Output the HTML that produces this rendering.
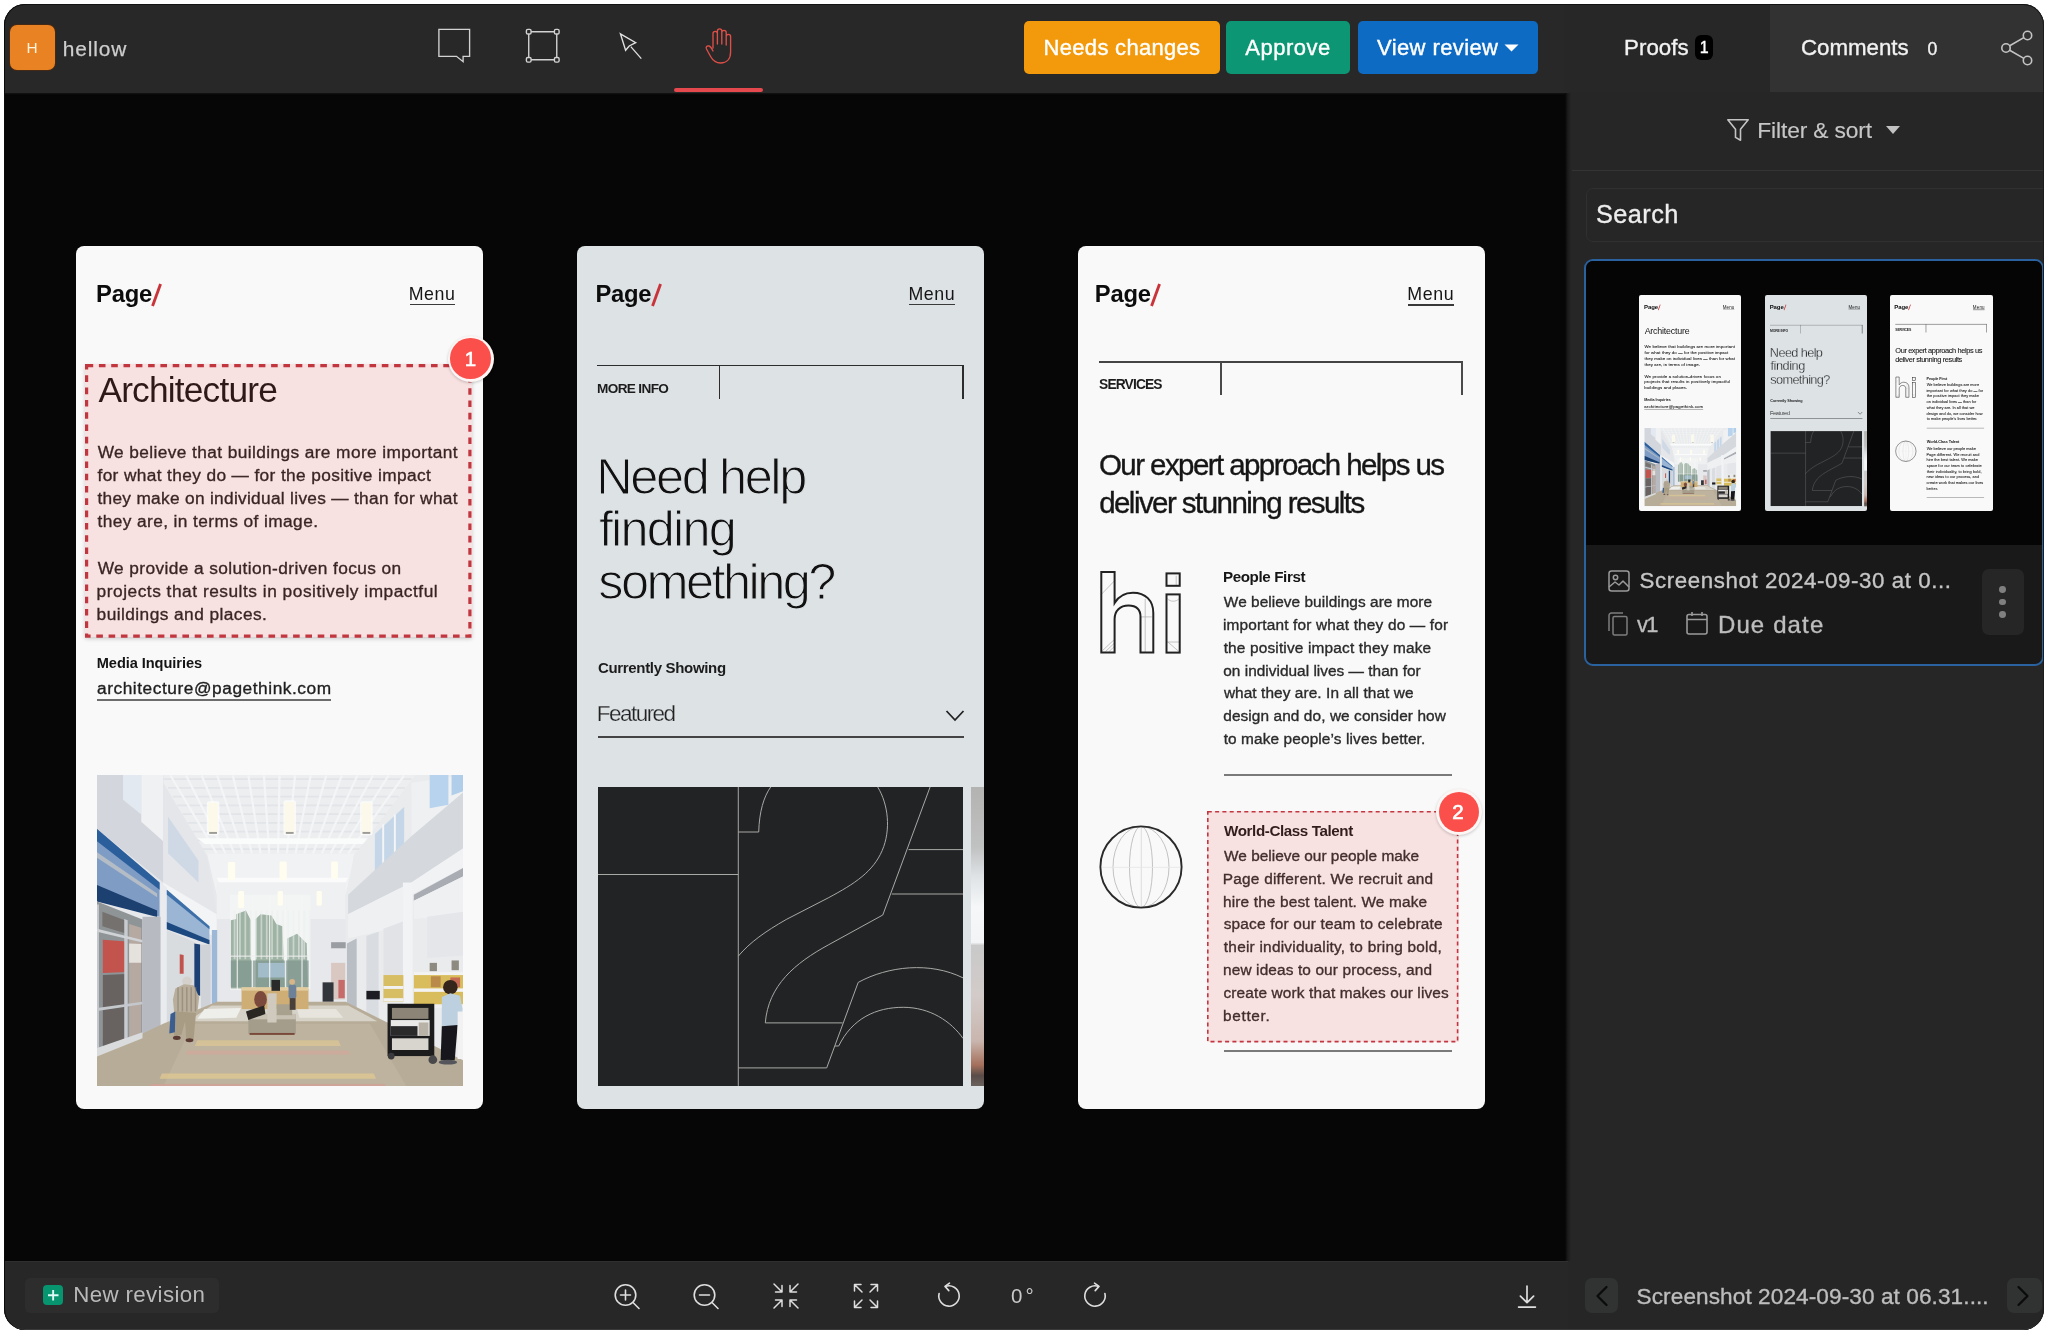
<!DOCTYPE html>
<html lang="en">
<head>
<meta charset="utf-8">
<title>hellow</title>
<style>
*{box-sizing:border-box;margin:0;padding:0}
html,body{width:2048px;height:1334px;overflow:hidden;background:#fff}
body{font-family:"Liberation Sans",sans-serif;position:relative;color:#e6e6e6}
.abs,.win *{position:absolute}
.win{position:absolute;left:4px;top:4px;width:2040px;height:1326px;border-radius:21px;background:#060606;overflow:hidden;will-change:transform;transform:translateZ(0)}
.t{white-space:nowrap;line-height:1}
.m{-webkit-text-stroke:.35px}
svg{display:block;overflow:visible}
/* header */
.hdr{left:0;top:0;width:1564px;height:88.500px;background:#282828;box-shadow:0 1px 1.500px #151515}
.side{left:1564px;top:0;width:476px;height:1326px;background:#262626}
.foot{left:0;top:1257px;width:1564px;height:69px;background:#272727;box-shadow:inset 0 1px 0 #2f2f2f}
.btn{top:17px;height:53px;border-radius:5px;color:#fff;-webkit-text-stroke:.4px;font-size:22px;text-align:center;line-height:53px;white-space:nowrap}
/* cards */
.card{top:242px;width:407px;height:862.7px;border-radius:8px;overflow:hidden;color:#1a1a1a}
.card .t{color:#151515}
</style>
</head>
<body>
<div class="win">
  <!-- canvas -->
  <div class="canvas" style="left:0;top:89px;width:1564px;height:1168px;background:#060606"></div>

  <!-- header -->
  <div class="hdr" id="hdr">
    <div style="left:6px;top:21px;width:45px;height:45px;border-radius:7px;background:#e88223;box-shadow:0 0 0 1px rgba(90,40,10,.6)"></div>
    <div class="t" style="left:22.54px;top:36.00px;font-size:15.4px;color:#fff3d8;letter-spacing:0;">H</div>
<div class="t" style="left:58.86px;top:35.00px;font-size:20.9px;color:#cdcdcd;letter-spacing:0.861px;-webkit-text-stroke:.25px;">hellow</div>

    <!-- tool icons -->
    <svg style="left:434.200px;top:24.200px" width="33" height="35" viewBox="0 0 33 35" fill="none" stroke="#d2d2d2" stroke-width="1.350" stroke-linejoin="miter"><path d="M.9 1.300h30.700v27h-6.500v5.400l-6.600-5.400H.9z"/></svg>
    <svg style="left:520.700px;top:23.800px" width="35.500" height="35.500" viewBox="0 0 38 38" fill="none" stroke="#d2d2d2" stroke-width="1.500"><path d="M6.500 4h25M6.500 34h25M4 6.500v25M34 6.500v25"/><rect x="1.500" y="1.500" width="5" height="5" rx="1.500"/><rect x="31.500" y="1.500" width="5" height="5" rx="1.500"/><rect x="1.500" y="31.500" width="5" height="5" rx="1.500"/><rect x="31.500" y="31.500" width="5" height="5" rx="1.500"/></svg>
    <svg style="left:615px;top:28px" width="26" height="30" viewBox="0 0 26 30" fill="none" stroke="#e2e2e2" stroke-width="1.350" stroke-linejoin="miter"><path d="M1.400 1.800l15.300 8.900-6.500 3.300-3.600 4.300z"/><path d="M11.800 14.600l10.500 12"/></svg>
    <svg style="left:700px;top:23px" width="30" height="38" viewBox="0 0 30 38" fill="none" stroke="#de4f48" stroke-width="1.350" stroke-linecap="round" stroke-linejoin="round"><path d="M9 21V6.500a2.200 2.200 0 0 1 4.400 0V17M13.400 17V4a2.200 2.200 0 0 1 4.400 0V17M17.800 17V5.500a2.200 2.200 0 0 1 4.400 0V18M22.200 18V9.500a2.200 2.200 0 0 1 4.400 0V25c0 7-4 11-10 11-5 0-7.500-2-10-6.500L2.500 22c-1-2 .5-3.500 2.500-3 1.500.4 2.500 2 4 5"/></svg>
    <div style="left:670px;top:84px;width:89px;height:4px;border-radius:2px;background:#e5484d"></div>
    <div style="left:1562px;top:0;width:1.500px;height:88px;background:#303030"></div>
    <!-- buttons -->
    <div class="btn" style="left:1020px;width:196px;background:#f39a0c;letter-spacing:.3px">Needs changes</div>
    <div class="btn" style="left:1222px;width:124px;background:#0c9673;letter-spacing:.5px">Approve</div>
    <div class="btn" style="left:1354px;width:180px;background:#0e6bc4;letter-spacing:.4px;text-align:left;padding-left:19px">View review</div>
    <svg style="left:1500px;top:40px" width="15" height="8" viewBox="0 0 15 8"><path d="M0.500 0.500h14L7.500 7.500z" fill="#fff"/></svg>
  </div>
  <!-- CARD 1 -->
  <div class="card" id="c1" style="left:72px;background:#f9f9f9">
<div class="t" style="left:20.03px;top:36.00px;font-size:23.8px;color:#0c0c0c;font-weight:700;letter-spacing:-0.236px;">Page</div>
<svg style="left:74px;top:35px" width="14" height="28" viewBox="0 0 14 28"><path d="M1.200 24.500L9.200 2.500l2.700 1L3.900 25.500z" fill="#c8343a"/></svg>
<div class="t" style="left:332.74px;top:40.00px;font-size:17.8px;color:#161616;letter-spacing:0.518px;">Menu</div>
<div style="left:333.8px;top:57.7px;width:45px;height:1.800px;background:#3a3a3a"></div>
<div class="t" style="left:22.43px;top:126.00px;font-size:35.3px;color:#121212;letter-spacing:-0.809px;">Architecture</div>
<div class="t" style="left:21.63px;top:198.00px;font-size:17.3px;color:#1e1e1e;letter-spacing:0.402px;-webkit-text-stroke:.35px #1e1e1e;">We believe that buildings are more important</div>
<div class="t" style="left:21.46px;top:221.00px;font-size:17.3px;color:#1e1e1e;letter-spacing:0.376px;-webkit-text-stroke:.35px #1e1e1e;">for what they do — for the positive impact</div>
<div class="t" style="left:21.44px;top:244.00px;font-size:17.3px;color:#1e1e1e;letter-spacing:0.303px;-webkit-text-stroke:.35px #1e1e1e;">they make on individual lives — than for what</div>
<div class="t" style="left:21.44px;top:267.00px;font-size:17.3px;color:#1e1e1e;letter-spacing:0.413px;-webkit-text-stroke:.35px #1e1e1e;">they are, in terms of image.</div>
<div class="t" style="left:21.63px;top:314.00px;font-size:17.3px;color:#1e1e1e;letter-spacing:0.407px;-webkit-text-stroke:.35px #1e1e1e;">We provide a solution-driven focus on</div>
<div class="t" style="left:20.59px;top:337.00px;font-size:17.3px;color:#1e1e1e;letter-spacing:0.526px;-webkit-text-stroke:.35px #1e1e1e;">projects that results in positively impactful</div>
<div class="t" style="left:20.59px;top:360.00px;font-size:17.3px;color:#1e1e1e;letter-spacing:0.444px;-webkit-text-stroke:.35px #1e1e1e;">buildings and places.</div>
<div class="t" style="left:20.74px;top:410.00px;font-size:14.6px;color:#141414;font-weight:700;letter-spacing:-0.063px;">Media Inquiries</div>
<div class="t" style="left:20.97px;top:434.00px;font-size:17.3px;color:#1e1e1e;letter-spacing:0.557px;-webkit-text-stroke:.35px #1e1e1e;">architecture@pagethink.com</div>
<div style="left:21px;top:453px;width:233.500px;height:2px;background:#6c6c6c"></div>
<div style="left:20.8px;top:528.5px;width:366px;height:311.500px;overflow:hidden"><svg width="366" height="311.5" viewBox="0 0 366 311.5" style="overflow:hidden" preserveAspectRatio="none"><defs><filter id="bl" x="-5%" y="-5%" width="110%" height="110%"><feGaussianBlur stdDeviation="3"/></filter><clipPath id="pc"><rect x="0" y="0" width="366" height="311.5"/></clipPath></defs><g clip-path="url(#pc)"><rect width="366" height="311.5" fill="#e6e8eb"/><g transform="scale(0.24335 0.24336) translate(-28 -28)" filter="url(#bl)"><rect x="28" y="28" width="1504" height="1280" fill="#e6e8eb"/><polygon points="280,28 1340,28 1085,360 480,360" fill="#eceef0"/><line x1="300" y1="45" x2="1320" y2="45" stroke="#e2e4e7" stroke-width="7"/><line x1="320" y1="81" x2="1294" y2="81" stroke="#e2e4e7" stroke-width="7"/><line x1="340" y1="117" x2="1268" y2="117" stroke="#e2e4e7" stroke-width="7"/><line x1="360" y1="153" x2="1242" y2="153" stroke="#e2e4e7" stroke-width="7"/><line x1="380" y1="189" x2="1216" y2="189" stroke="#e2e4e7" stroke-width="7"/><line x1="400" y1="225" x2="1190" y2="225" stroke="#e2e4e7" stroke-width="7"/><line x1="420" y1="261" x2="1164" y2="261" stroke="#e2e4e7" stroke-width="7"/><line x1="440" y1="297" x2="1138" y2="297" stroke="#e2e4e7" stroke-width="7"/><line x1="460" y1="333" x2="1112" y2="333" stroke="#e2e4e7" stroke-width="7"/><line x1="330" y1="30" x2="520" y2="350" stroke="#f4f5f6" stroke-width="9"/><line x1="394" y1="30" x2="556" y2="350" stroke="#f4f5f6" stroke-width="9"/><line x1="458" y1="30" x2="592" y2="350" stroke="#f4f5f6" stroke-width="9"/><line x1="522" y1="30" x2="628" y2="350" stroke="#f4f5f6" stroke-width="9"/><line x1="586" y1="30" x2="664" y2="350" stroke="#f4f5f6" stroke-width="9"/><line x1="650" y1="30" x2="700" y2="350" stroke="#f4f5f6" stroke-width="9"/><line x1="714" y1="30" x2="736" y2="350" stroke="#f4f5f6" stroke-width="9"/><line x1="778" y1="30" x2="772" y2="350" stroke="#f4f5f6" stroke-width="9"/><line x1="842" y1="30" x2="808" y2="350" stroke="#f4f5f6" stroke-width="9"/><line x1="906" y1="30" x2="844" y2="350" stroke="#f4f5f6" stroke-width="9"/><line x1="970" y1="30" x2="880" y2="350" stroke="#f4f5f6" stroke-width="9"/><line x1="1034" y1="30" x2="916" y2="350" stroke="#f4f5f6" stroke-width="9"/><line x1="1098" y1="30" x2="952" y2="350" stroke="#f4f5f6" stroke-width="9"/><line x1="1162" y1="30" x2="988" y2="350" stroke="#f4f5f6" stroke-width="9"/><line x1="1226" y1="30" x2="1024" y2="350" stroke="#f4f5f6" stroke-width="9"/><line x1="1290" y1="30" x2="1060" y2="350" stroke="#f4f5f6" stroke-width="9"/><polygon points="440,288 1160,288 1120,312 470,312" fill="#fafbfb"/><polygon points="480,352 1085,352 1060,520 520,520" fill="#f1f2f3"/><polygon points="520,450 1060,450 1050,470 530,470" fill="#fbfbfb"/><polygon points="520,470 1050,470 1050,620 520,620" fill="#eef0f1"/><polygon points="28,28 300,28 300,470 28,250" fill="#d3d6dc"/><polygon points="135,28 210,28 210,190 135,130" fill="#e3e9f1"/><polygon points="210,28 300,28 300,300 210,220" fill="#f0f1f3"/><polygon points="300,60 480,360 520,600 520,960 300,1000" fill="#e4e6ea"/><polygon points="320,200 445,380 445,470 320,350" fill="#cfd9e6"/><polygon points="300,470 520,600 520,700 300,560" fill="#f3f4f5"/><polygon points="28,250 285,470 285,610 28,545" fill="#7f9cc4"/><polygon points="28,250 285,470 285,500 28,300" fill="#2c5f9c"/><polygon points="28,345 275,515 275,530 28,368" fill="#b4bcc6"/><polygon points="28,480 275,585 275,612 28,548" fill="#1b3f70"/><polygon points="28,548 215,622 215,1105 28,1172" fill="#8f9497"/><polygon points="50,590 150,628 150,680 50,650" fill="#75716e"/><polygon points="52,705 150,712 150,838 52,842" fill="#c2534d"/><polygon points="52,850 150,846 150,1110 52,1150" fill="#676361"/><polygon points="160,640 210,656 210,1090 160,1110" fill="#b6a9a2"/><polygon points="160,720 210,722 210,800 160,800" fill="#e5e1dc"/><rect x="28" y="560" width="8" height="610" fill="#c4c8cc"/><polygon points="140,620 154,625 154,1115 140,1120" fill="#c8ccd0"/><polygon points="28,660 215,706 215,716 28,672" fill="#d0d3d6"/><polygon points="28,985 215,960 215,970 28,998" fill="#c4c8cc"/><polygon points="215,610 290,610 290,1120 215,1120" fill="#b7bbc1"/><polygon points="290,470 315,490 315,1100 290,1120" fill="#e9ebee"/><polygon points="315,500 490,650 490,722 315,660" fill="#9bb5d4"/><polygon points="315,500 490,650 490,662 315,520" fill="#3d6fa8"/><polygon points="315,632 490,706 490,724 315,662" fill="#1f4a80"/><polygon points="315,665 430,715 430,1000 315,1050" fill="#d9dcdf"/><polygon points="368,765 384,768 384,845 368,845" fill="#c0524c"/><polygon points="428,720 452,725 452,935 428,930" fill="#1d3f73"/><polygon points="455,725 495,725 495,1000 455,1000" fill="#cfd3d8"/><polygon points="500,665 522,665 522,975 500,985" fill="#9db7d6"/><rect x="575" y="520" width="330" height="390" fill="#f3f5f5"/><polygon points="578,625 600,620 600,600 640,585 660,625 662,905 578,905" fill="#9fb3a5"/><polygon points="680,620 700,600 745,605 765,640 790,650 800,905 680,905" fill="#9fb3a5"/><polygon points="810,700 850,680 890,720 895,905 810,905" fill="#a3b6aa"/><rect x="578" y="790" width="320" height="110" fill="#7d968d" opacity=".7"/><rect x="690" y="800" width="110" height="60" fill="#a9c4d6" opacity=".8"/><rect x="590" y="585" width="7" height="200" fill="#e9eeeb" opacity=".55"/><rect x="612" y="585" width="7" height="200" fill="#e9eeeb" opacity=".55"/><rect x="634" y="585" width="7" height="200" fill="#e9eeeb" opacity=".55"/><rect x="656" y="585" width="7" height="200" fill="#e9eeeb" opacity=".55"/><rect x="678" y="585" width="7" height="200" fill="#e9eeeb" opacity=".55"/><rect x="700" y="585" width="7" height="200" fill="#e9eeeb" opacity=".55"/><rect x="722" y="585" width="7" height="200" fill="#e9eeeb" opacity=".55"/><rect x="744" y="585" width="7" height="200" fill="#e9eeeb" opacity=".55"/><rect x="766" y="585" width="7" height="200" fill="#e9eeeb" opacity=".55"/><rect x="788" y="585" width="7" height="200" fill="#e9eeeb" opacity=".55"/><rect x="810" y="585" width="7" height="200" fill="#e9eeeb" opacity=".55"/><rect x="832" y="585" width="7" height="200" fill="#e9eeeb" opacity=".55"/><rect x="854" y="585" width="7" height="200" fill="#e9eeeb" opacity=".55"/><rect x="876" y="585" width="7" height="200" fill="#e9eeeb" opacity=".55"/><rect x="898" y="585" width="7" height="200" fill="#e9eeeb" opacity=".55"/><rect x="602" y="520" width="5" height="390" fill="#f4f5f5" opacity=".85"/><rect x="664" y="520" width="5" height="390" fill="#f4f5f5" opacity=".85"/><rect x="735" y="520" width="5" height="390" fill="#f4f5f5" opacity=".85"/><rect x="800" y="520" width="5" height="390" fill="#f4f5f5" opacity=".85"/><rect x="868" y="520" width="5" height="390" fill="#f4f5f5" opacity=".85"/><rect x="575" y="770" width="330" height="5" fill="#eef0f0" opacity=".85"/><polygon points="1340,28 1532,28 1532,1200 1050,960 1050,520 1085,360" fill="#e9ebed"/><polygon points="1320,60 1532,28 1532,110 1320,280" fill="#eef0f2"/><polygon points="1395,28 1472,28 1472,150 1395,165" fill="#b7d3ee"/><polygon points="1485,28 1532,28 1532,95 1485,112" fill="#b0cdea"/><polygon points="1170,270 1290,160 1290,330 1170,420" fill="#c5d6e8"/><rect x="1200" y="230" width="8" height="170" fill="#f4f5f6"/><rect x="1248" y="190" width="8" height="170" fill="#f4f5f6"/><polygon points="1320,280 1532,100 1532,330 1320,470 1060,600 1060,520" fill="#d5d8dd"/><polygon points="1320,470 1532,330 1532,410 1320,520" fill="#f1f2f4"/><polygon points="1330,520 1532,410 1532,445 1330,545" fill="#a9adb3"/><polygon points="1130,630 1285,555 1285,580 1130,650" fill="#b9bdc2"/><polygon points="1060,600 1320,470 1320,640 1060,700" fill="#eef0f2"/><polygon points="1330,545 1532,445 1532,600 1330,620" fill="#eff0f2"/><rect x="1285" y="470" width="40" height="500" fill="#f2f3f5"/><polygon points="1055,720 1095,700 1095,1010 1055,990" fill="#b9bdc4"/><polygon points="1135,690 1185,672 1185,1030 1135,1010" fill="#d9dce0"/><polygon points="1205,660 1285,630 1285,850 1205,850" fill="#e1e3e7"/><polygon points="1385,610 1532,590 1532,770 1385,780" fill="#e4e6ea"/><rect x="1395" y="800" width="30" height="34" fill="#8f8a80"/><rect x="1485" y="790" width="30" height="40" fill="#8f8a80"/><rect x="1205" y="850" width="82" height="110" fill="#d7bd63"/><rect x="1205" y="895" width="82" height="12" fill="#f1f1f1"/><rect x="1205" y="945" width="82" height="14" fill="#f1f1f1"/><rect x="1330" y="850" width="202" height="130" fill="#d9bd5c"/><rect x="1330" y="838" width="202" height="12" fill="#f3f3f4"/><rect x="1330" y="905" width="202" height="14" fill="#f3f3f4"/><rect x="1330" y="970" width="202" height="16" fill="#f0f0f1"/><rect x="1400" y="855" width="40" height="45" fill="#b98a4a"/><rect x="1480" y="860" width="40" height="40" fill="#c46a52"/><rect x="990" y="715" width="60" height="25" fill="#9a9da1"/><rect x="990" y="800" width="58" height="150" fill="#d9c8c2"/><rect x="1020" y="870" width="26" height="75" fill="#c66a6a"/><rect x="955" y="880" width="45" height="80" fill="#33363a"/><rect x="1135" y="915" width="55" height="35" fill="#1e1f22"/><polygon points="28,1180 300,1050 520,960 1050,960 1532,1200 1532,1308 28,1308" fill="#b7ac97"/><polygon points="420,1050 1150,1050 1300,1308 300,1308" fill="#c2b8a4" opacity=".6"/><polygon points="500,975 1060,975 1180,1040 400,1040" fill="#d6d2c8"/><polygon points="470,990 620,985 600,1025 440,1030" fill="#eeeeea"/><polygon points="850,990 1010,990 1040,1025 860,1025" fill="#e6e4dd"/><polygon points="440,1118 1020,1118 1030,1142 430,1142" fill="#dcc594" opacity=".75"/><polygon points="400,1160 1060,1160 1070,1177 390,1177" fill="#d3a89d" opacity=".7"/><polygon points="295,1255 1165,1255 1175,1276 285,1276" fill="#dfc792" opacity=".8"/><polygon points="250,1298 1210,1298 1215,1308 245,1308" fill="#d3a096" opacity=".8"/><polygon points="28,1150 215,1085 215,1110 28,1185" fill="#d9dbdc"/><rect x="622" y="905" width="275" height="85" fill="#cfae74"/><rect x="622" y="900" width="275" height="14" fill="#e3cda0"/><rect x="745" y="870" width="35" height="45" fill="#2c2c2c"/><rect x="650" y="1010" width="195" height="82" fill="#a49d8b"/><rect x="650" y="1010" width="195" height="22" fill="#c6c1b2"/><rect x="728" y="925" width="38" height="120" fill="#cfcabd"/><rect x="766" y="970" width="64" height="45" fill="#a8a18e"/><rect x="655" y="1088" width="185" height="8" fill="#7a4a3a"/><ellipse cx="700" cy="950" rx="26" ry="34" fill="#7b4a3c"/><polygon points="640,1000 715,975 720,1010 650,1035" fill="#2a2522"/><rect x="815" y="890" width="32" height="58" rx="10" fill="#6d8299"/><rect x="820" y="945" width="24" height="48" fill="#4a3f3a"/><circle cx="830" cy="878" r="12" fill="#d8b48a"/><ellipse cx="398" cy="876" rx="20" ry="20" fill="#d4d0cb"/><polygon points="350,905 385,888 425,892 448,940 440,1010 345,1005 340,950" fill="#b9ae9b"/><rect x="358" y="900" width="6" height="100" fill="#8f8573" opacity=".7"/><rect x="376" y="900" width="6" height="100" fill="#8f8573" opacity=".7"/><rect x="394" y="900" width="6" height="100" fill="#8f8573" opacity=".7"/><rect x="412" y="900" width="6" height="100" fill="#8f8573" opacity=".7"/><rect x="430" y="900" width="6" height="100" fill="#8f8573" opacity=".7"/><polygon points="350,1000 435,1005 425,1115 395,1118 390,1040 375,1095 345,1100" fill="#a89d84"/><polygon points="330,1010 350,1000 348,1085 325,1090" fill="#3b5d8f"/><ellipse cx="356" cy="1108" rx="16" ry="9" fill="#5b3b35"/><ellipse cx="408" cy="1118" rx="16" ry="8" fill="#5b3b35"/><rect x="1222" y="968" width="192" height="215" fill="#1d1d1f"/><rect x="1240" y="985" width="150" height="45" fill="#8d8478"/><rect x="1235" y="1035" width="160" height="65" fill="#e9e9e7"/><rect x="1235" y="1060" width="110" height="40" fill="#2a2a2c"/><rect x="1350" y="1045" width="40" height="55" fill="#b9b2a6"/><rect x="1240" y="1110" width="150" height="48" fill="#d8d5cf"/><circle cx="1237" cy="1183" r="14" fill="#3a3a3c"/><circle cx="1408" cy="1198" r="18" fill="#4a4a4c"/><ellipse cx="1480" cy="900" rx="30" ry="30" fill="#35261f"/><polygon points="1445,940 1480,925 1520,935 1530,990 1520,1060 1445,1065" fill="#bcd0e0"/><polygon points="1445,1060 1510,1055 1498,1200 1440,1200" fill="#18181a"/><ellipse cx="1470" cy="1208" rx="38" ry="10" fill="#55575c"/><rect x="1510" y="1000" width="22" height="195" fill="#f2f2f3"/><rect x="479" y="136" width="52" height="140" rx="10" fill="#ffffff" opacity=".7"/><rect x="485" y="142" width="40" height="128" rx="6" fill="#fdf9ea"/><rect x="489" y="262" width="32" height="8" fill="#9c9b97"/><rect x="794" y="132" width="52" height="144" rx="10" fill="#ffffff" opacity=".7"/><rect x="800" y="138" width="40" height="132" rx="6" fill="#fdf9ea"/><rect x="804" y="262" width="32" height="8" fill="#9c9b97"/><rect x="1109" y="136" width="52" height="140" rx="10" fill="#ffffff" opacity=".7"/><rect x="1115" y="142" width="40" height="128" rx="6" fill="#fdf9ea"/><rect x="1119" y="262" width="32" height="8" fill="#9c9b97"/><rect x="566" y="385" width="30" height="75" rx="6" fill="#fffcf0"/><rect x="778" y="383" width="30" height="78" rx="6" fill="#fffcf0"/><rect x="990" y="383" width="28" height="72" rx="6" fill="#fffcf0"/><rect x="608" y="505" width="24" height="70" rx="6" fill="#fffcf0"/><rect x="770" y="505" width="22" height="60" rx="6" fill="#fffcf0"/><rect x="930" y="505" width="22" height="60" rx="6" fill="#fffcf0"/></g></g></svg></div>
</div>
<div style="left:81px;top:359.6px;width:386.5px;height:273.79999999999995px;background:rgba(240,70,70,.13);box-shadow:0 2px 4px rgba(0,0,0,.18)"></div><svg style="left:81px;top:359.6px" width="386.5" height="273.79999999999995" viewBox="0 0 386.5 273.79999999999995"><rect x="1.600" y="1.600" width="383.3" height="270.59999999999997" fill="none" stroke="#c23640" stroke-width="3.200" stroke-dasharray="6.600 5.700"/></svg><div style="left:443.5px;top:331.6px;width:46px;height:46px;border-radius:50%;background:#fdf6f5;box-shadow:0 1px 3px rgba(0,0,0,.2)"></div><div style="left:446.2px;top:334.3px;width:40.600px;height:40.600px;border-radius:50%;background:#fa4f4b"></div><div class="t" style="left:460.84px;top:345.00px;font-size:20.5px;color:#fff;letter-spacing:0;-webkit-text-stroke:.6px #fff;">1</div>
  <!-- CARD 2 -->
  <div class="card" id="c2" style="left:573px;background:#dde2e5">
<div class="t" style="left:18.43px;top:36.00px;font-size:23.8px;color:#0c0c0c;font-weight:700;letter-spacing:-0.236px;">Page</div>
<svg style="left:73px;top:35px" width="14" height="28" viewBox="0 0 14 28"><path d="M1.200 24.500L9.200 2.500l2.700 1L3.900 25.500z" fill="#c8343a"/></svg>
<div class="t" style="left:331.44px;top:40.00px;font-size:17.8px;color:#161616;letter-spacing:0.551px;">Menu</div>
<div style="left:332px;top:57.7px;width:45.500px;height:1.800px;background:#3a3a3a"></div>
<div style="left:19.5px;top:118.7px;width:367.500px;height:1.600px;background:#2c2c2c"></div>
<div style="left:141.8px;top:119px;width:1.600px;height:34px;background:#2c2c2c"></div>
<div style="left:385.4px;top:119px;width:1.600px;height:34px;background:#2c2c2c"></div>
<div class="t" style="left:20.10px;top:136.00px;font-size:13.6px;color:#1c1c1c;font-weight:700;letter-spacing:-0.658px;">MORE INFO</div>
<div class="t" style="left:19.26px;top:206.00px;font-size:50.5px;color:#111;letter-spacing:-2.402px;-webkit-text-stroke:1.1px #dde2e5;">Need help</div>
<div class="t" style="left:21.89px;top:258.00px;font-size:50.5px;color:#111;letter-spacing:-1.811px;-webkit-text-stroke:1.1px #dde2e5;">finding</div>
<div class="t" style="left:21.24px;top:311.00px;font-size:50.5px;color:#111;letter-spacing:-2.545px;-webkit-text-stroke:1.1px #dde2e5;">something?</div>
<div class="t" style="left:20.89px;top:414.00px;font-size:15px;color:#1c1c1c;font-weight:700;letter-spacing:-0.320px;">Currently Showing</div>
<div class="t" style="left:19.66px;top:457.00px;font-size:22.5px;color:#222;letter-spacing:-1.511px;-webkit-text-stroke:.25px #dde2e5;">Featured</div>
<svg style="left:368px;top:462px" width="20" height="14" viewBox="0 0 20 14" fill="none" stroke="#222" stroke-width="1.800"><path d="M1.500 3l8.500 9 8.500-9"/></svg>
<div style="left:21px;top:490.3px;width:366px;height:1.600px;background:#444"></div>
<div style="left:20.6px;top:541.3px;width:365.200px;height:299px;overflow:hidden"><svg width="365.2" height="299" viewBox="0 0 365.2 299" style="overflow:hidden"><rect width="365.2" height="299" fill="#222325"/><path d="M140.3 0.0L140.3 298.9M0.0 87.5L140.3 87.5M140.3 45.0L160.7 45.0C161.3 24.6 165.8 9.6 172.7 0.0M279.7 0.0C290.2 17.1 293.2 42.6 284.2 63.5C275.2 84.5 257.2 96.5 230.2 110.9L188.2 132.5C167.3 144.5 152.3 155.0 140.3 169.1M332.1 0.0L284.8 128.0L230.2 158.0C197.2 176.0 170.3 198.4 167.3 235.9L244.6 235.9M310.6 62.6L365.1 62.6M293.8 107.0L365.1 107.0M140.3 280.9L228.7 280.9L260.2 195.4C290.2 179.0 332.1 174.5 365.1 190.9M240.7 259.0L237.1 259.0M240.7 259.0C254.2 231.4 278.2 220.3 305.2 220.3C332.1 220.3 353.1 234.4 365.1 251.5" fill="none" stroke="#a9a9a6" stroke-width="1"/></svg></div>
<div style="left:394px;top:541.3px;width:14px;height:299px;background:linear-gradient(180deg,#b3b3b1 0%,#c0c1c1 20%,#dfe3e6 30%,#f5f7f8 40%,#f2f4f5 52%,#c9c9c9 53%,#d2cbc9 70%,#c9b5ad 85%,#a5705c 93%,#5a4c48 96.5%,#6b625e 100%)"></div>
</div>

  <!-- CARD 3 -->
  <div class="card" id="c3" style="left:1074px;background:#f9f9f9">
<div class="t" style="left:16.83px;top:36.00px;font-size:23.8px;color:#0c0c0c;font-weight:700;letter-spacing:-0.236px;">Page</div>
<svg style="left:71.2px;top:35px" width="14" height="28" viewBox="0 0 14 28"><path d="M1.200 24.500L9.200 2.500l2.700 1L3.900 25.500z" fill="#c8343a"/></svg>
<div class="t" style="left:329.24px;top:40.00px;font-size:17.8px;color:#161616;letter-spacing:0.651px;">Menu</div>
<div style="left:330.3px;top:57.8px;width:45.500px;height:1.800px;background:#3a3a3a"></div>
<div style="left:20.6px;top:115.2px;width:364px;height:1.600px;background:#444"></div>
<div style="left:142.3px;top:115.5px;width:1.500px;height:33.500px;background:#4a4a4a"></div>
<div style="left:383.0px;top:115.5px;width:1.500px;height:33.500px;background:#4a4a4a"></div>
<div class="t" style="left:21.11px;top:132.00px;font-size:13.8px;color:#1c1c1c;font-weight:700;letter-spacing:-0.872px;">SERVICES</div>
<div class="t" style="left:21.01px;top:204.00px;font-size:29.5px;color:#161616;letter-spacing:-1.578px;-webkit-text-stroke:.35px #161616;">Our expert approach helps us</div>
<div class="t" style="left:21.16px;top:242.00px;font-size:29.5px;color:#161616;letter-spacing:-1.549px;-webkit-text-stroke:.35px #161616;">deliver stunning results</div>
<div style="left:22.0px;top:325.0px;width:84px;height:84px"><svg width="84" height="84" viewBox="0 0 84 84" fill="none" stroke="#222" stroke-width="2" stroke-linejoin="miter"><g stroke="#b5b5b5" stroke-width=".8"><path d="M1.100 23.600L14.700 9.600M2.400 79.700l12.300-11.500M5.500 80.500l9.200-8.600M9 80.500l5.700-5.300M45.200 27.800v53.600M41.100 45.900h10.700M67.900 71l12 10.400M67 71h12.700M67.500 27.800c3 3.200 8.500 3.200 11.500 0M76.200 4.700v9.900"/></g><path d="M1.300 1.100H14.600V31.900C18.500 25.500 25 21.700 32.900 21.700C45.500 21.700 53.300 29.500 53.300 42V81.600H40.500V46C40.500 38.500 36 34.500 28.500 34.500C20 34.500 14.600 40 14.600 48V81.600H1.300Z"/><rect x="66.500" y="2.400" width="13.200" height="12.400"/><rect x="66.500" y="23.400" width="13.200" height="58.200"/></svg></div>
<div class="t" style="left:144.90px;top:323.00px;font-size:15.2px;color:#161616;font-weight:700;letter-spacing:-0.387px;">People First</div>
<div class="t" style="left:145.84px;top:348.00px;font-size:15.4px;color:#2a2a2a;letter-spacing:0.050px;-webkit-text-stroke:.35px #2a2a2a;">We believe buildings are more</div>
<div class="t" style="left:144.88px;top:371.00px;font-size:15.4px;color:#2a2a2a;letter-spacing:0.175px;-webkit-text-stroke:.35px #2a2a2a;">important for what they do — for</div>
<div class="t" style="left:145.67px;top:394.00px;font-size:15.4px;color:#2a2a2a;letter-spacing:0.170px;-webkit-text-stroke:.35px #2a2a2a;">the positive impact they make</div>
<div class="t" style="left:145.25px;top:417.00px;font-size:15.4px;color:#2a2a2a;letter-spacing:0.022px;-webkit-text-stroke:.35px #2a2a2a;">on individual lives — than for</div>
<div class="t" style="left:145.90px;top:439.00px;font-size:15.4px;color:#2a2a2a;letter-spacing:0.083px;-webkit-text-stroke:.35px #2a2a2a;">what they are. In all that we</div>
<div class="t" style="left:145.25px;top:462.00px;font-size:15.4px;color:#2a2a2a;letter-spacing:0.092px;-webkit-text-stroke:.35px #2a2a2a;">design and do, we consider how</div>
<div class="t" style="left:145.67px;top:485.00px;font-size:15.4px;color:#2a2a2a;letter-spacing:0.118px;-webkit-text-stroke:.35px #2a2a2a;">to make people’s lives better.</div>
<div style="left:145.9px;top:527.5px;width:228.200px;height:2.400px;background:#7a7a7a"></div>
<div style="left:20.2px;top:577.7px;width:86px;height:86px"><svg width="86" height="86" viewBox="0 0 86 86" fill="none"><g stroke="#b4b4b4" stroke-width=".8"><ellipse cx="43" cy="43" rx="28" ry="40.500"/><ellipse cx="43" cy="43" rx="11.500" ry="40.500"/></g><path d="M43.300 2.500v81" stroke="#d4d6d8" stroke-width=".8"/><path d="M4 43.300h78" stroke="#e6e6e6" stroke-width=".9"/><circle cx="43" cy="43" r="40.600" stroke="#2a2a2a" stroke-width="1.900"/></svg></div>
<div class="t" style="left:146.08px;top:577.00px;font-size:15.2px;color:#161616;font-weight:700;letter-spacing:-0.409px;">World-Class Talent</div>
<div class="t" style="left:146.04px;top:602.00px;font-size:15.4px;color:#2a2a2a;letter-spacing:0.010px;-webkit-text-stroke:.35px #2a2a2a;">We believe our people make</div>
<div class="t" style="left:144.84px;top:625.00px;font-size:15.4px;color:#2a2a2a;letter-spacing:0.219px;-webkit-text-stroke:.35px #2a2a2a;">Page different. We recruit and</div>
<div class="t" style="left:145.04px;top:648.00px;font-size:15.4px;color:#2a2a2a;letter-spacing:0.148px;-webkit-text-stroke:.35px #2a2a2a;">hire the best talent. We make</div>
<div class="t" style="left:145.68px;top:670.00px;font-size:15.4px;color:#2a2a2a;letter-spacing:0.195px;-webkit-text-stroke:.35px #2a2a2a;">space for our team to celebrate</div>
<div class="t" style="left:145.87px;top:693.00px;font-size:15.4px;color:#2a2a2a;letter-spacing:0.228px;-webkit-text-stroke:.35px #2a2a2a;">their individuality, to bring bold,</div>
<div class="t" style="left:145.08px;top:716.00px;font-size:15.4px;color:#2a2a2a;letter-spacing:0.127px;-webkit-text-stroke:.35px #2a2a2a;">new ideas to our process, and</div>
<div class="t" style="left:145.45px;top:739.00px;font-size:15.4px;color:#2a2a2a;letter-spacing:0.149px;-webkit-text-stroke:.35px #2a2a2a;">create work that makes our lives</div>
<div class="t" style="left:145.11px;top:762.00px;font-size:15.4px;color:#2a2a2a;letter-spacing:0.631px;-webkit-text-stroke:.35px #2a2a2a;">better.</div>
<div style="left:145.9px;top:804.1px;width:228.200px;height:2.400px;background:#7a7a7a"></div>
</div>
<div style="left:1203.3px;top:806.6px;width:251.4px;height:231.4px;background:rgba(240,70,70,.13)"></div><svg style="left:1203.3px;top:806.6px" width="251.4" height="231.4" viewBox="0 0 251.4 231.4"><rect x=".8" y=".8" width="249.8" height="229.8" fill="none" stroke="#c23640" stroke-width="1.600" stroke-dasharray="4 3.300"/></svg><div style="left:1431.8px;top:785.1px;width:46px;height:46px;border-radius:50%;background:#fdf6f5;box-shadow:0 1px 3px rgba(0,0,0,.2)"></div><div style="left:1434.5px;top:787.8px;width:40.600px;height:40.600px;border-radius:50%;background:#fa4f4b"></div><div class="t" style="left:1448.27px;top:798.00px;font-size:20.5px;color:#fff;letter-spacing:0;-webkit-text-stroke:.7px #fff;">2</div>

  <!-- footer -->
  <div class="foot" id="foot">
<div style="left:21px;top:16.5px;width:194px;height:35px;border-radius:5px;background:#2d2d2d"></div>
<div style="left:39.2px;top:23.8px;width:20.300px;height:20.300px;border-radius:4px;background:#06956f"></div>
<svg style="left:39.2px;top:23.8px" width="20.300" height="20.300" viewBox="0 0 20.300 20.300" stroke="#dcfbf6" stroke-width="1.900" fill="none"><path d="M10.150 5v10.500M5 10.250h10.500"/></svg>
<div class="t" style="left:69.37px;top:23.00px;font-size:22.3px;color:#b9b9b9;letter-spacing:0.356px;">New revision</div>
<svg style="left:607.7px;top:19.8px" width="30" height="30" viewBox="-15.0 -15.0 30 30" fill="none" stroke="#dedede" stroke-width="1.6" stroke-linecap="round" stroke-linejoin="round"><circle cx="-1.500" cy="-1" r="10.300"/><path d="M6 6.500L12 12.500M-1.500 -6v10M-6.500 -1h10"/></svg>
<svg style="left:686.7px;top:19.8px" width="30" height="30" viewBox="-15.0 -15.0 30 30" fill="none" stroke="#dedede" stroke-width="1.6" stroke-linecap="round" stroke-linejoin="round"><circle cx="-1.500" cy="-1" r="10.300"/><path d="M6 6.500L12 12.500M-6.500 -1h10"/></svg>
<svg style="left:768.4px;top:21.3px" width="28" height="28" viewBox="-14.0 -14.0 28 28" fill="none" stroke="#dedede" stroke-width="1.5" stroke-linecap="round" stroke-linejoin="round"><path d="M-12 -12l8 8M-10.500 -4h6.500v-6.500M12 -12l-8 8M10.500 -4H4v-6.500M-12 12l8 -8M-10.500 4h6.500v6.500M12 12l-8 -8M10.500 4H4v6.500"/></svg>
<svg style="left:847.8px;top:21.3px" width="28" height="28" viewBox="-14.0 -14.0 28 28" fill="none" stroke="#dedede" stroke-width="1.5" stroke-linecap="round" stroke-linejoin="round"><path d="M-4 -4l-7.500 -7.500M-11.500 -5v-6.500h6.500M4 -4l7.500 -7.500M11.500 -5v-6.500H5M-4 4l-7.500 7.500M-11.500 5v6.500h6.500M4 4l7.500 7.500M11.500 5v6.500H5"/></svg>
<svg style="left:931.0px;top:21.3px" width="28" height="28" viewBox="-14.0 -14.0 28 28" fill="none" stroke="#dedede" stroke-width="1.6" stroke-linecap="round" stroke-linejoin="round"><path d="M-3.500 -9.600A10.200 10.200 0 1 1 -9.900 -2.500"/><path d="M0.500 -12.800l-4.500 3.200l3.800 4.200" /></svg>
<div class="t" style="left:1007.00px;top:25.00px;font-size:20.5px;color:#c9c9c9;letter-spacing:3.218px;">0°</div>
<svg style="left:1077.0px;top:21.3px" width="28" height="28" viewBox="-14.0 -14.0 28 28" fill="none" stroke="#dedede" stroke-width="1.6" stroke-linecap="round" stroke-linejoin="round"><path d="M3.500 -9.600A10.200 10.200 0 1 0 9.900 -2.500"/><path d="M-0.500 -12.800l4.500 3.200l-3.800 4.200" /></svg>
<svg style="left:1511.8px;top:23.3px" width="22" height="26" viewBox="-11.0 -13.0 22 26" fill="none" stroke="#dedede" stroke-width="1.7" stroke-linecap="round" stroke-linejoin="round"><path d="M0 -10.900v16.400M-6.600 -0.900l6.600 6.600l6.600 -6.600M-8.400 10.100h16.800"/></svg>
  </div>
  <!-- sidebar -->
  <div class="side" id="side">
    <div style="left:-3px;top:89px;width:5.500px;height:1168px;background:linear-gradient(90deg,#060606,#1a1a1a 45%,#262626)"></div>
    <div id="sidein" style="left:-4px;top:0;width:480px;height:1326px">
    <div style="left:0;top:0;width:206px;height:88px;background:#272727"></div>
    <div style="left:206px;top:0;width:280px;height:88px;background:#323232"></div>

    <div style="left:131px;top:31px;width:18px;height:25px;border-radius:6px;background:#000"></div>
    <div class="t m" style="left:131.300px;top:35.500px;width:18px;text-align:center;font-size:16px;color:#fff">1</div>


    <svg style="left:436px;top:26px" width="34" height="36" viewBox="0 0 34 36" fill="none" stroke="#c4c4c4" stroke-width="1.600"><circle cx="6" cy="18" r="4.200"/><circle cx="27.500" cy="5.500" r="4.200"/><circle cx="27.500" cy="30.500" r="4.200"/><path d="M9.700 15.800L23.800 7.600M9.700 20.200l14.100 8.200"/></svg>
    <svg style="left:162px;top:114px" width="24" height="24" viewBox="0 0 24 24" fill="none" stroke="#c4c4c4" stroke-width="1.600" stroke-linejoin="round"><path d="M1.800 1.800h20.400l-7.700 9.400v11l-5-2.800v-8.200z"/></svg>

    <svg style="left:322px;top:122px" width="14" height="8" viewBox="0 0 14 8"><path d="M0 0h14L7 8z" fill="#c2c2c2"/></svg>
    <div style="left:8px;top:166px;width:480px;height:1px;background:#343434"></div>
    <div style="left:22px;top:184px;width:470px;height:54px;border:1px solid #303030;border-radius:7px;background:#262626"></div>

    <!-- proof card -->
    <div style="left:20px;top:255px;width:459.500px;height:407px;border:2px solid #2a62a0;border-radius:9px;background:#191919;overflow:hidden" id="pcard">
      <div style="left:0;top:0;width:470px;height:284px;background:#050505"></div>
    </div>
    <!-- thumbs -->
<div style="left:74.7px;top:291.2px;width:102.400px;height:215.500px;background:#f9f9f9;border-radius:2px;overflow:hidden"><div style="left:0;top:0;width:407px;height:862px;transform:scale(0.25160);transform-origin:0 0">
<div class="t" style="left:20.03px;top:36.00px;font-size:23.8px;color:#0c0c0c;font-weight:700;letter-spacing:-0.236px;">Page</div>
<svg style="left:74px;top:35px" width="14" height="28" viewBox="0 0 14 28"><path d="M1.200 24.500L9.200 2.500l2.700 1L3.900 25.500z" fill="#c8343a"/></svg>
<div class="t" style="left:332.74px;top:40.00px;font-size:17.8px;color:#161616;letter-spacing:0.518px;">Menu</div>
<div style="left:333.8px;top:57.7px;width:45px;height:1.800px;background:#3a3a3a"></div>
<div class="t" style="left:22.43px;top:126.00px;font-size:35.3px;color:#121212;letter-spacing:-0.809px;">Architecture</div>
<div class="t" style="left:21.63px;top:198.00px;font-size:17.3px;color:#1e1e1e;letter-spacing:0.402px;-webkit-text-stroke:.35px #1e1e1e;">We believe that buildings are more important</div>
<div class="t" style="left:21.46px;top:221.00px;font-size:17.3px;color:#1e1e1e;letter-spacing:0.376px;-webkit-text-stroke:.35px #1e1e1e;">for what they do — for the positive impact</div>
<div class="t" style="left:21.44px;top:244.00px;font-size:17.3px;color:#1e1e1e;letter-spacing:0.303px;-webkit-text-stroke:.35px #1e1e1e;">they make on individual lives — than for what</div>
<div class="t" style="left:21.44px;top:267.00px;font-size:17.3px;color:#1e1e1e;letter-spacing:0.413px;-webkit-text-stroke:.35px #1e1e1e;">they are, in terms of image.</div>
<div class="t" style="left:21.63px;top:314.00px;font-size:17.3px;color:#1e1e1e;letter-spacing:0.407px;-webkit-text-stroke:.35px #1e1e1e;">We provide a solution-driven focus on</div>
<div class="t" style="left:20.59px;top:337.00px;font-size:17.3px;color:#1e1e1e;letter-spacing:0.526px;-webkit-text-stroke:.35px #1e1e1e;">projects that results in positively impactful</div>
<div class="t" style="left:20.59px;top:360.00px;font-size:17.3px;color:#1e1e1e;letter-spacing:0.444px;-webkit-text-stroke:.35px #1e1e1e;">buildings and places.</div>
<div class="t" style="left:20.74px;top:410.00px;font-size:14.6px;color:#141414;font-weight:700;letter-spacing:-0.063px;">Media Inquiries</div>
<div class="t" style="left:20.97px;top:434.00px;font-size:17.3px;color:#1e1e1e;letter-spacing:0.557px;-webkit-text-stroke:.35px #1e1e1e;">architecture@pagethink.com</div>
<div style="left:21px;top:453px;width:233.500px;height:2px;background:#6c6c6c"></div>
<div style="left:20.8px;top:528.5px;width:366px;height:311.500px;overflow:hidden"><svg width="366" height="311.5" viewBox="0 0 366 311.5" style="overflow:hidden" preserveAspectRatio="none"><defs><filter id="bl" x="-5%" y="-5%" width="110%" height="110%"><feGaussianBlur stdDeviation="3"/></filter><clipPath id="pc"><rect x="0" y="0" width="366" height="311.5"/></clipPath></defs><g clip-path="url(#pc)"><rect width="366" height="311.5" fill="#e6e8eb"/><g transform="scale(0.24335 0.24336) translate(-28 -28)" filter="url(#bl)"><rect x="28" y="28" width="1504" height="1280" fill="#e6e8eb"/><polygon points="280,28 1340,28 1085,360 480,360" fill="#eceef0"/><line x1="300" y1="45" x2="1320" y2="45" stroke="#e2e4e7" stroke-width="7"/><line x1="320" y1="81" x2="1294" y2="81" stroke="#e2e4e7" stroke-width="7"/><line x1="340" y1="117" x2="1268" y2="117" stroke="#e2e4e7" stroke-width="7"/><line x1="360" y1="153" x2="1242" y2="153" stroke="#e2e4e7" stroke-width="7"/><line x1="380" y1="189" x2="1216" y2="189" stroke="#e2e4e7" stroke-width="7"/><line x1="400" y1="225" x2="1190" y2="225" stroke="#e2e4e7" stroke-width="7"/><line x1="420" y1="261" x2="1164" y2="261" stroke="#e2e4e7" stroke-width="7"/><line x1="440" y1="297" x2="1138" y2="297" stroke="#e2e4e7" stroke-width="7"/><line x1="460" y1="333" x2="1112" y2="333" stroke="#e2e4e7" stroke-width="7"/><line x1="330" y1="30" x2="520" y2="350" stroke="#f4f5f6" stroke-width="9"/><line x1="394" y1="30" x2="556" y2="350" stroke="#f4f5f6" stroke-width="9"/><line x1="458" y1="30" x2="592" y2="350" stroke="#f4f5f6" stroke-width="9"/><line x1="522" y1="30" x2="628" y2="350" stroke="#f4f5f6" stroke-width="9"/><line x1="586" y1="30" x2="664" y2="350" stroke="#f4f5f6" stroke-width="9"/><line x1="650" y1="30" x2="700" y2="350" stroke="#f4f5f6" stroke-width="9"/><line x1="714" y1="30" x2="736" y2="350" stroke="#f4f5f6" stroke-width="9"/><line x1="778" y1="30" x2="772" y2="350" stroke="#f4f5f6" stroke-width="9"/><line x1="842" y1="30" x2="808" y2="350" stroke="#f4f5f6" stroke-width="9"/><line x1="906" y1="30" x2="844" y2="350" stroke="#f4f5f6" stroke-width="9"/><line x1="970" y1="30" x2="880" y2="350" stroke="#f4f5f6" stroke-width="9"/><line x1="1034" y1="30" x2="916" y2="350" stroke="#f4f5f6" stroke-width="9"/><line x1="1098" y1="30" x2="952" y2="350" stroke="#f4f5f6" stroke-width="9"/><line x1="1162" y1="30" x2="988" y2="350" stroke="#f4f5f6" stroke-width="9"/><line x1="1226" y1="30" x2="1024" y2="350" stroke="#f4f5f6" stroke-width="9"/><line x1="1290" y1="30" x2="1060" y2="350" stroke="#f4f5f6" stroke-width="9"/><polygon points="440,288 1160,288 1120,312 470,312" fill="#fafbfb"/><polygon points="480,352 1085,352 1060,520 520,520" fill="#f1f2f3"/><polygon points="520,450 1060,450 1050,470 530,470" fill="#fbfbfb"/><polygon points="520,470 1050,470 1050,620 520,620" fill="#eef0f1"/><polygon points="28,28 300,28 300,470 28,250" fill="#d3d6dc"/><polygon points="135,28 210,28 210,190 135,130" fill="#e3e9f1"/><polygon points="210,28 300,28 300,300 210,220" fill="#f0f1f3"/><polygon points="300,60 480,360 520,600 520,960 300,1000" fill="#e4e6ea"/><polygon points="320,200 445,380 445,470 320,350" fill="#cfd9e6"/><polygon points="300,470 520,600 520,700 300,560" fill="#f3f4f5"/><polygon points="28,250 285,470 285,610 28,545" fill="#7f9cc4"/><polygon points="28,250 285,470 285,500 28,300" fill="#2c5f9c"/><polygon points="28,345 275,515 275,530 28,368" fill="#b4bcc6"/><polygon points="28,480 275,585 275,612 28,548" fill="#1b3f70"/><polygon points="28,548 215,622 215,1105 28,1172" fill="#8f9497"/><polygon points="50,590 150,628 150,680 50,650" fill="#75716e"/><polygon points="52,705 150,712 150,838 52,842" fill="#c2534d"/><polygon points="52,850 150,846 150,1110 52,1150" fill="#676361"/><polygon points="160,640 210,656 210,1090 160,1110" fill="#b6a9a2"/><polygon points="160,720 210,722 210,800 160,800" fill="#e5e1dc"/><rect x="28" y="560" width="8" height="610" fill="#c4c8cc"/><polygon points="140,620 154,625 154,1115 140,1120" fill="#c8ccd0"/><polygon points="28,660 215,706 215,716 28,672" fill="#d0d3d6"/><polygon points="28,985 215,960 215,970 28,998" fill="#c4c8cc"/><polygon points="215,610 290,610 290,1120 215,1120" fill="#b7bbc1"/><polygon points="290,470 315,490 315,1100 290,1120" fill="#e9ebee"/><polygon points="315,500 490,650 490,722 315,660" fill="#9bb5d4"/><polygon points="315,500 490,650 490,662 315,520" fill="#3d6fa8"/><polygon points="315,632 490,706 490,724 315,662" fill="#1f4a80"/><polygon points="315,665 430,715 430,1000 315,1050" fill="#d9dcdf"/><polygon points="368,765 384,768 384,845 368,845" fill="#c0524c"/><polygon points="428,720 452,725 452,935 428,930" fill="#1d3f73"/><polygon points="455,725 495,725 495,1000 455,1000" fill="#cfd3d8"/><polygon points="500,665 522,665 522,975 500,985" fill="#9db7d6"/><rect x="575" y="520" width="330" height="390" fill="#f3f5f5"/><polygon points="578,625 600,620 600,600 640,585 660,625 662,905 578,905" fill="#9fb3a5"/><polygon points="680,620 700,600 745,605 765,640 790,650 800,905 680,905" fill="#9fb3a5"/><polygon points="810,700 850,680 890,720 895,905 810,905" fill="#a3b6aa"/><rect x="578" y="790" width="320" height="110" fill="#7d968d" opacity=".7"/><rect x="690" y="800" width="110" height="60" fill="#a9c4d6" opacity=".8"/><rect x="590" y="585" width="7" height="200" fill="#e9eeeb" opacity=".55"/><rect x="612" y="585" width="7" height="200" fill="#e9eeeb" opacity=".55"/><rect x="634" y="585" width="7" height="200" fill="#e9eeeb" opacity=".55"/><rect x="656" y="585" width="7" height="200" fill="#e9eeeb" opacity=".55"/><rect x="678" y="585" width="7" height="200" fill="#e9eeeb" opacity=".55"/><rect x="700" y="585" width="7" height="200" fill="#e9eeeb" opacity=".55"/><rect x="722" y="585" width="7" height="200" fill="#e9eeeb" opacity=".55"/><rect x="744" y="585" width="7" height="200" fill="#e9eeeb" opacity=".55"/><rect x="766" y="585" width="7" height="200" fill="#e9eeeb" opacity=".55"/><rect x="788" y="585" width="7" height="200" fill="#e9eeeb" opacity=".55"/><rect x="810" y="585" width="7" height="200" fill="#e9eeeb" opacity=".55"/><rect x="832" y="585" width="7" height="200" fill="#e9eeeb" opacity=".55"/><rect x="854" y="585" width="7" height="200" fill="#e9eeeb" opacity=".55"/><rect x="876" y="585" width="7" height="200" fill="#e9eeeb" opacity=".55"/><rect x="898" y="585" width="7" height="200" fill="#e9eeeb" opacity=".55"/><rect x="602" y="520" width="5" height="390" fill="#f4f5f5" opacity=".85"/><rect x="664" y="520" width="5" height="390" fill="#f4f5f5" opacity=".85"/><rect x="735" y="520" width="5" height="390" fill="#f4f5f5" opacity=".85"/><rect x="800" y="520" width="5" height="390" fill="#f4f5f5" opacity=".85"/><rect x="868" y="520" width="5" height="390" fill="#f4f5f5" opacity=".85"/><rect x="575" y="770" width="330" height="5" fill="#eef0f0" opacity=".85"/><polygon points="1340,28 1532,28 1532,1200 1050,960 1050,520 1085,360" fill="#e9ebed"/><polygon points="1320,60 1532,28 1532,110 1320,280" fill="#eef0f2"/><polygon points="1395,28 1472,28 1472,150 1395,165" fill="#b7d3ee"/><polygon points="1485,28 1532,28 1532,95 1485,112" fill="#b0cdea"/><polygon points="1170,270 1290,160 1290,330 1170,420" fill="#c5d6e8"/><rect x="1200" y="230" width="8" height="170" fill="#f4f5f6"/><rect x="1248" y="190" width="8" height="170" fill="#f4f5f6"/><polygon points="1320,280 1532,100 1532,330 1320,470 1060,600 1060,520" fill="#d5d8dd"/><polygon points="1320,470 1532,330 1532,410 1320,520" fill="#f1f2f4"/><polygon points="1330,520 1532,410 1532,445 1330,545" fill="#a9adb3"/><polygon points="1130,630 1285,555 1285,580 1130,650" fill="#b9bdc2"/><polygon points="1060,600 1320,470 1320,640 1060,700" fill="#eef0f2"/><polygon points="1330,545 1532,445 1532,600 1330,620" fill="#eff0f2"/><rect x="1285" y="470" width="40" height="500" fill="#f2f3f5"/><polygon points="1055,720 1095,700 1095,1010 1055,990" fill="#b9bdc4"/><polygon points="1135,690 1185,672 1185,1030 1135,1010" fill="#d9dce0"/><polygon points="1205,660 1285,630 1285,850 1205,850" fill="#e1e3e7"/><polygon points="1385,610 1532,590 1532,770 1385,780" fill="#e4e6ea"/><rect x="1395" y="800" width="30" height="34" fill="#8f8a80"/><rect x="1485" y="790" width="30" height="40" fill="#8f8a80"/><rect x="1205" y="850" width="82" height="110" fill="#d7bd63"/><rect x="1205" y="895" width="82" height="12" fill="#f1f1f1"/><rect x="1205" y="945" width="82" height="14" fill="#f1f1f1"/><rect x="1330" y="850" width="202" height="130" fill="#d9bd5c"/><rect x="1330" y="838" width="202" height="12" fill="#f3f3f4"/><rect x="1330" y="905" width="202" height="14" fill="#f3f3f4"/><rect x="1330" y="970" width="202" height="16" fill="#f0f0f1"/><rect x="1400" y="855" width="40" height="45" fill="#b98a4a"/><rect x="1480" y="860" width="40" height="40" fill="#c46a52"/><rect x="990" y="715" width="60" height="25" fill="#9a9da1"/><rect x="990" y="800" width="58" height="150" fill="#d9c8c2"/><rect x="1020" y="870" width="26" height="75" fill="#c66a6a"/><rect x="955" y="880" width="45" height="80" fill="#33363a"/><rect x="1135" y="915" width="55" height="35" fill="#1e1f22"/><polygon points="28,1180 300,1050 520,960 1050,960 1532,1200 1532,1308 28,1308" fill="#b7ac97"/><polygon points="420,1050 1150,1050 1300,1308 300,1308" fill="#c2b8a4" opacity=".6"/><polygon points="500,975 1060,975 1180,1040 400,1040" fill="#d6d2c8"/><polygon points="470,990 620,985 600,1025 440,1030" fill="#eeeeea"/><polygon points="850,990 1010,990 1040,1025 860,1025" fill="#e6e4dd"/><polygon points="440,1118 1020,1118 1030,1142 430,1142" fill="#dcc594" opacity=".75"/><polygon points="400,1160 1060,1160 1070,1177 390,1177" fill="#d3a89d" opacity=".7"/><polygon points="295,1255 1165,1255 1175,1276 285,1276" fill="#dfc792" opacity=".8"/><polygon points="250,1298 1210,1298 1215,1308 245,1308" fill="#d3a096" opacity=".8"/><polygon points="28,1150 215,1085 215,1110 28,1185" fill="#d9dbdc"/><rect x="622" y="905" width="275" height="85" fill="#cfae74"/><rect x="622" y="900" width="275" height="14" fill="#e3cda0"/><rect x="745" y="870" width="35" height="45" fill="#2c2c2c"/><rect x="650" y="1010" width="195" height="82" fill="#a49d8b"/><rect x="650" y="1010" width="195" height="22" fill="#c6c1b2"/><rect x="728" y="925" width="38" height="120" fill="#cfcabd"/><rect x="766" y="970" width="64" height="45" fill="#a8a18e"/><rect x="655" y="1088" width="185" height="8" fill="#7a4a3a"/><ellipse cx="700" cy="950" rx="26" ry="34" fill="#7b4a3c"/><polygon points="640,1000 715,975 720,1010 650,1035" fill="#2a2522"/><rect x="815" y="890" width="32" height="58" rx="10" fill="#6d8299"/><rect x="820" y="945" width="24" height="48" fill="#4a3f3a"/><circle cx="830" cy="878" r="12" fill="#d8b48a"/><ellipse cx="398" cy="876" rx="20" ry="20" fill="#d4d0cb"/><polygon points="350,905 385,888 425,892 448,940 440,1010 345,1005 340,950" fill="#b9ae9b"/><rect x="358" y="900" width="6" height="100" fill="#8f8573" opacity=".7"/><rect x="376" y="900" width="6" height="100" fill="#8f8573" opacity=".7"/><rect x="394" y="900" width="6" height="100" fill="#8f8573" opacity=".7"/><rect x="412" y="900" width="6" height="100" fill="#8f8573" opacity=".7"/><rect x="430" y="900" width="6" height="100" fill="#8f8573" opacity=".7"/><polygon points="350,1000 435,1005 425,1115 395,1118 390,1040 375,1095 345,1100" fill="#a89d84"/><polygon points="330,1010 350,1000 348,1085 325,1090" fill="#3b5d8f"/><ellipse cx="356" cy="1108" rx="16" ry="9" fill="#5b3b35"/><ellipse cx="408" cy="1118" rx="16" ry="8" fill="#5b3b35"/><rect x="1222" y="968" width="192" height="215" fill="#1d1d1f"/><rect x="1240" y="985" width="150" height="45" fill="#8d8478"/><rect x="1235" y="1035" width="160" height="65" fill="#e9e9e7"/><rect x="1235" y="1060" width="110" height="40" fill="#2a2a2c"/><rect x="1350" y="1045" width="40" height="55" fill="#b9b2a6"/><rect x="1240" y="1110" width="150" height="48" fill="#d8d5cf"/><circle cx="1237" cy="1183" r="14" fill="#3a3a3c"/><circle cx="1408" cy="1198" r="18" fill="#4a4a4c"/><ellipse cx="1480" cy="900" rx="30" ry="30" fill="#35261f"/><polygon points="1445,940 1480,925 1520,935 1530,990 1520,1060 1445,1065" fill="#bcd0e0"/><polygon points="1445,1060 1510,1055 1498,1200 1440,1200" fill="#18181a"/><ellipse cx="1470" cy="1208" rx="38" ry="10" fill="#55575c"/><rect x="1510" y="1000" width="22" height="195" fill="#f2f2f3"/><rect x="479" y="136" width="52" height="140" rx="10" fill="#ffffff" opacity=".7"/><rect x="485" y="142" width="40" height="128" rx="6" fill="#fdf9ea"/><rect x="489" y="262" width="32" height="8" fill="#9c9b97"/><rect x="794" y="132" width="52" height="144" rx="10" fill="#ffffff" opacity=".7"/><rect x="800" y="138" width="40" height="132" rx="6" fill="#fdf9ea"/><rect x="804" y="262" width="32" height="8" fill="#9c9b97"/><rect x="1109" y="136" width="52" height="140" rx="10" fill="#ffffff" opacity=".7"/><rect x="1115" y="142" width="40" height="128" rx="6" fill="#fdf9ea"/><rect x="1119" y="262" width="32" height="8" fill="#9c9b97"/><rect x="566" y="385" width="30" height="75" rx="6" fill="#fffcf0"/><rect x="778" y="383" width="30" height="78" rx="6" fill="#fffcf0"/><rect x="990" y="383" width="28" height="72" rx="6" fill="#fffcf0"/><rect x="608" y="505" width="24" height="70" rx="6" fill="#fffcf0"/><rect x="770" y="505" width="22" height="60" rx="6" fill="#fffcf0"/><rect x="930" y="505" width="22" height="60" rx="6" fill="#fffcf0"/></g></g></svg></div>
</div></div>
<div style="left:200.6px;top:291.2px;width:102.400px;height:215.500px;background:#dde2e5;border-radius:2px;overflow:hidden"><div style="left:0;top:0;width:407px;height:862px;transform:scale(0.25160);transform-origin:0 0">
<div class="t" style="left:18.43px;top:36.00px;font-size:23.8px;color:#0c0c0c;font-weight:700;letter-spacing:-0.236px;">Page</div>
<svg style="left:73px;top:35px" width="14" height="28" viewBox="0 0 14 28"><path d="M1.200 24.500L9.200 2.500l2.700 1L3.900 25.500z" fill="#c8343a"/></svg>
<div class="t" style="left:331.44px;top:40.00px;font-size:17.8px;color:#161616;letter-spacing:0.551px;">Menu</div>
<div style="left:332px;top:57.7px;width:45.500px;height:1.800px;background:#3a3a3a"></div>
<div style="left:19.5px;top:118.7px;width:367.500px;height:1.600px;background:#2c2c2c"></div>
<div style="left:141.8px;top:119px;width:1.600px;height:34px;background:#2c2c2c"></div>
<div style="left:385.4px;top:119px;width:1.600px;height:34px;background:#2c2c2c"></div>
<div class="t" style="left:20.10px;top:136.00px;font-size:13.6px;color:#1c1c1c;font-weight:700;letter-spacing:-0.658px;">MORE INFO</div>
<div class="t" style="left:19.26px;top:206.00px;font-size:50.5px;color:#111;letter-spacing:-2.402px;-webkit-text-stroke:1.1px #dde2e5;">Need help</div>
<div class="t" style="left:21.89px;top:258.00px;font-size:50.5px;color:#111;letter-spacing:-1.811px;-webkit-text-stroke:1.1px #dde2e5;">finding</div>
<div class="t" style="left:21.24px;top:311.00px;font-size:50.5px;color:#111;letter-spacing:-2.545px;-webkit-text-stroke:1.1px #dde2e5;">something?</div>
<div class="t" style="left:20.89px;top:414.00px;font-size:15px;color:#1c1c1c;font-weight:700;letter-spacing:-0.320px;">Currently Showing</div>
<div class="t" style="left:19.66px;top:457.00px;font-size:22.5px;color:#222;letter-spacing:-1.511px;-webkit-text-stroke:.25px #dde2e5;">Featured</div>
<svg style="left:368px;top:462px" width="20" height="14" viewBox="0 0 20 14" fill="none" stroke="#222" stroke-width="1.800"><path d="M1.500 3l8.500 9 8.500-9"/></svg>
<div style="left:21px;top:490.3px;width:366px;height:1.600px;background:#444"></div>
<div style="left:20.6px;top:541.3px;width:365.200px;height:299px;overflow:hidden"><svg width="365.2" height="299" viewBox="0 0 365.2 299" style="overflow:hidden"><rect width="365.2" height="299" fill="#222325"/><path d="M140.3 0.0L140.3 298.9M0.0 87.5L140.3 87.5M140.3 45.0L160.7 45.0C161.3 24.6 165.8 9.6 172.7 0.0M279.7 0.0C290.2 17.1 293.2 42.6 284.2 63.5C275.2 84.5 257.2 96.5 230.2 110.9L188.2 132.5C167.3 144.5 152.3 155.0 140.3 169.1M332.1 0.0L284.8 128.0L230.2 158.0C197.2 176.0 170.3 198.4 167.3 235.9L244.6 235.9M310.6 62.6L365.1 62.6M293.8 107.0L365.1 107.0M140.3 280.9L228.7 280.9L260.2 195.4C290.2 179.0 332.1 174.5 365.1 190.9M240.7 259.0L237.1 259.0M240.7 259.0C254.2 231.4 278.2 220.3 305.2 220.3C332.1 220.3 353.1 234.4 365.1 251.5" fill="none" stroke="#a9a9a6" stroke-width="1"/></svg></div>
<div style="left:394px;top:541.3px;width:14px;height:299px;background:linear-gradient(180deg,#b3b3b1 0%,#c0c1c1 20%,#dfe3e6 30%,#f5f7f8 40%,#f2f4f5 52%,#c9c9c9 53%,#d2cbc9 70%,#c9b5ad 85%,#a5705c 93%,#5a4c48 96.5%,#6b625e 100%)"></div>
</div></div>
<div style="left:326.4px;top:291.2px;width:102.400px;height:215.500px;background:#f9f9f9;border-radius:2px;overflow:hidden"><div style="left:0;top:0;width:407px;height:862px;transform:scale(0.25160);transform-origin:0 0">
<div class="t" style="left:16.83px;top:36.00px;font-size:23.8px;color:#0c0c0c;font-weight:700;letter-spacing:-0.236px;">Page</div>
<svg style="left:71.2px;top:35px" width="14" height="28" viewBox="0 0 14 28"><path d="M1.200 24.500L9.200 2.500l2.700 1L3.900 25.500z" fill="#c8343a"/></svg>
<div class="t" style="left:329.24px;top:40.00px;font-size:17.8px;color:#161616;letter-spacing:0.651px;">Menu</div>
<div style="left:330.3px;top:57.8px;width:45.500px;height:1.800px;background:#3a3a3a"></div>
<div style="left:20.6px;top:115.2px;width:364px;height:1.600px;background:#444"></div>
<div style="left:142.3px;top:115.5px;width:1.500px;height:33.500px;background:#4a4a4a"></div>
<div style="left:383.0px;top:115.5px;width:1.500px;height:33.500px;background:#4a4a4a"></div>
<div class="t" style="left:21.11px;top:132.00px;font-size:13.8px;color:#1c1c1c;font-weight:700;letter-spacing:-0.872px;">SERVICES</div>
<div class="t" style="left:21.01px;top:204.00px;font-size:29.5px;color:#161616;letter-spacing:-1.578px;-webkit-text-stroke:.35px #161616;">Our expert approach helps us</div>
<div class="t" style="left:21.16px;top:242.00px;font-size:29.5px;color:#161616;letter-spacing:-1.549px;-webkit-text-stroke:.35px #161616;">deliver stunning results</div>
<div style="left:22.0px;top:325.0px;width:84px;height:84px"><svg width="84" height="84" viewBox="0 0 84 84" fill="none" stroke="#222" stroke-width="2" stroke-linejoin="miter"><g stroke="#b5b5b5" stroke-width=".8"><path d="M1.100 23.600L14.700 9.600M2.400 79.700l12.300-11.500M5.500 80.500l9.200-8.600M9 80.500l5.700-5.300M45.200 27.800v53.600M41.100 45.900h10.700M67.900 71l12 10.400M67 71h12.700M67.500 27.800c3 3.200 8.500 3.200 11.500 0M76.200 4.700v9.900"/></g><path d="M1.300 1.100H14.600V31.900C18.500 25.500 25 21.700 32.900 21.700C45.500 21.700 53.300 29.500 53.300 42V81.600H40.500V46C40.500 38.500 36 34.500 28.500 34.500C20 34.500 14.600 40 14.600 48V81.600H1.300Z"/><rect x="66.500" y="2.400" width="13.200" height="12.400"/><rect x="66.500" y="23.400" width="13.200" height="58.200"/></svg></div>
<div class="t" style="left:144.90px;top:323.00px;font-size:15.2px;color:#161616;font-weight:700;letter-spacing:-0.387px;">People First</div>
<div class="t" style="left:145.84px;top:348.00px;font-size:15.4px;color:#2a2a2a;letter-spacing:0.050px;-webkit-text-stroke:.35px #2a2a2a;">We believe buildings are more</div>
<div class="t" style="left:144.88px;top:371.00px;font-size:15.4px;color:#2a2a2a;letter-spacing:0.175px;-webkit-text-stroke:.35px #2a2a2a;">important for what they do — for</div>
<div class="t" style="left:145.67px;top:394.00px;font-size:15.4px;color:#2a2a2a;letter-spacing:0.170px;-webkit-text-stroke:.35px #2a2a2a;">the positive impact they make</div>
<div class="t" style="left:145.25px;top:417.00px;font-size:15.4px;color:#2a2a2a;letter-spacing:0.022px;-webkit-text-stroke:.35px #2a2a2a;">on individual lives — than for</div>
<div class="t" style="left:145.90px;top:439.00px;font-size:15.4px;color:#2a2a2a;letter-spacing:0.083px;-webkit-text-stroke:.35px #2a2a2a;">what they are. In all that we</div>
<div class="t" style="left:145.25px;top:462.00px;font-size:15.4px;color:#2a2a2a;letter-spacing:0.092px;-webkit-text-stroke:.35px #2a2a2a;">design and do, we consider how</div>
<div class="t" style="left:145.67px;top:485.00px;font-size:15.4px;color:#2a2a2a;letter-spacing:0.118px;-webkit-text-stroke:.35px #2a2a2a;">to make people’s lives better.</div>
<div style="left:145.9px;top:527.5px;width:228.200px;height:2.400px;background:#7a7a7a"></div>
<div style="left:20.2px;top:577.7px;width:86px;height:86px"><svg width="86" height="86" viewBox="0 0 86 86" fill="none"><g stroke="#b4b4b4" stroke-width=".8"><ellipse cx="43" cy="43" rx="28" ry="40.500"/><ellipse cx="43" cy="43" rx="11.500" ry="40.500"/></g><path d="M43.300 2.500v81" stroke="#d4d6d8" stroke-width=".8"/><path d="M4 43.300h78" stroke="#e6e6e6" stroke-width=".9"/><circle cx="43" cy="43" r="40.600" stroke="#2a2a2a" stroke-width="1.900"/></svg></div>
<div class="t" style="left:146.08px;top:577.00px;font-size:15.2px;color:#161616;font-weight:700;letter-spacing:-0.409px;">World-Class Talent</div>
<div class="t" style="left:146.04px;top:602.00px;font-size:15.4px;color:#2a2a2a;letter-spacing:0.010px;-webkit-text-stroke:.35px #2a2a2a;">We believe our people make</div>
<div class="t" style="left:144.84px;top:625.00px;font-size:15.4px;color:#2a2a2a;letter-spacing:0.219px;-webkit-text-stroke:.35px #2a2a2a;">Page different. We recruit and</div>
<div class="t" style="left:145.04px;top:648.00px;font-size:15.4px;color:#2a2a2a;letter-spacing:0.148px;-webkit-text-stroke:.35px #2a2a2a;">hire the best talent. We make</div>
<div class="t" style="left:145.68px;top:670.00px;font-size:15.4px;color:#2a2a2a;letter-spacing:0.195px;-webkit-text-stroke:.35px #2a2a2a;">space for our team to celebrate</div>
<div class="t" style="left:145.87px;top:693.00px;font-size:15.4px;color:#2a2a2a;letter-spacing:0.228px;-webkit-text-stroke:.35px #2a2a2a;">their individuality, to bring bold,</div>
<div class="t" style="left:145.08px;top:716.00px;font-size:15.4px;color:#2a2a2a;letter-spacing:0.127px;-webkit-text-stroke:.35px #2a2a2a;">new ideas to our process, and</div>
<div class="t" style="left:145.45px;top:739.00px;font-size:15.4px;color:#2a2a2a;letter-spacing:0.149px;-webkit-text-stroke:.35px #2a2a2a;">create work that makes our lives</div>
<div class="t" style="left:145.11px;top:762.00px;font-size:15.4px;color:#2a2a2a;letter-spacing:0.631px;-webkit-text-stroke:.35px #2a2a2a;">better.</div>
<div style="left:145.9px;top:804.1px;width:228.200px;height:2.400px;background:#7a7a7a"></div>
</div></div>
<div class="t" style="left:60.07px;top:33.00px;font-size:22.3px;color:#f2f2f2;letter-spacing:0.036px;-webkit-text-stroke:.35px;">Proofs</div>
<div class="t" style="left:236.98px;top:33.00px;font-size:22.3px;color:#f2f2f2;letter-spacing:-0.011px;-webkit-text-stroke:.35px;">Comments</div>
<div class="t" style="left:363.51px;top:37.00px;font-size:17.6px;color:#f2f2f2;letter-spacing:0;-webkit-text-stroke:.35px;">0</div>
<div class="t" style="left:193.33px;top:115.00px;font-size:22.8px;color:#c6c6c6;letter-spacing:-0.143px;-webkit-text-stroke:.15px;">Filter &amp; sort</div>
<div class="t" style="left:32.06px;top:198.00px;font-size:25.3px;color:#ededed;letter-spacing:0.421px;-webkit-text-stroke:.35px;">Search</div>
<div class="t" style="left:75.60px;top:566.00px;font-size:22.3px;color:#c6c6c6;letter-spacing:0.586px;-webkit-text-stroke:.35px;">Screenshot 2024-09-30 at 0...</div>
<div class="t" style="left:73.03px;top:610.00px;font-size:22px;color:#bdbdbd;letter-spacing:-1.825px;-webkit-text-stroke:.35px;">v1</div>
<div class="t" style="left:153.93px;top:609.00px;font-size:24px;color:#bdbdbd;letter-spacing:1.132px;-webkit-text-stroke:.35px;">Due date</div>
<div class="t" style="left:72.58px;top:1282.00px;font-size:22.6px;color:#bdbdbd;letter-spacing:0.087px;-webkit-text-stroke:.35px;">Screenshot 2024-09-30 at 06.31....</div>
    <svg style="left:44px;top:566px" width="22" height="22" viewBox="0 0 22 22" fill="none" stroke="#9a9a9a" stroke-width="1.500" stroke-linejoin="round"><rect x="1" y="1" width="20" height="20" rx="2.500"/><circle cx="7.500" cy="7.500" r="2.200"/><path d="M1 17l6-5 4 3 4-4 6 6"/></svg>

    <svg style="left:44px;top:608px" width="20" height="24" viewBox="0 0 20 24" fill="none" stroke="#7d7d7d" stroke-width="1.500" stroke-linejoin="round"><rect x="5" y="4.500" width="14" height="18.500" rx="1.500"/><path d="M15 1H3.500A2.500 2.500 0 0 0 1 3.500V19"/></svg>

    <svg style="left:122px;top:607px" width="22" height="24" viewBox="0 0 22 24" fill="none" stroke="#9a9a9a" stroke-width="1.600" stroke-linejoin="round"><rect x="1" y="3.500" width="20" height="19.500" rx="2"/><path d="M1 8.500h20M6 1v4M16 1v4"/></svg>

    <div style="left:417.500px;top:564.500px;width:42.500px;height:66.500px;border-radius:7px;background:#262626"></div>
    <div style="left:434.900px;top:582.200px;width:6.800px;height:6.800px;border-radius:50%;background:#808080"></div>
    <div style="left:434.900px;top:594.500px;width:6.800px;height:6.800px;border-radius:50%;background:#808080"></div>
    <div style="left:434.900px;top:606.900px;width:6.800px;height:6.800px;border-radius:50%;background:#808080"></div>
    <!-- bottom nav -->
    <div style="left:21px;top:1273.500px;width:33px;height:35px;border-radius:7px;background:#313332"></div>
    <svg style="left:31.500px;top:1281.500px" width="12" height="20" viewBox="0 0 12 20" fill="none" stroke="#0b0b0b" stroke-width="2.300" stroke-linecap="round" stroke-linejoin="round"><path d="M10.500 1L1.500 10l9 9"/></svg>

    <div style="left:442.500px;top:1273.500px;width:35px;height:35px;border-radius:7px;background:#313332"></div>
    <svg style="left:453px;top:1281.500px" width="12" height="20" viewBox="0 0 12 20" fill="none" stroke="#0b0b0b" stroke-width="2.300" stroke-linecap="round" stroke-linejoin="round"><path d="M1.500 1L10.500 10l-9 9"/></svg>
    </div>
  </div>
  <div style="left:0;top:0;width:2040px;height:1326px;border-radius:21px;box-shadow:inset 1px 0 0 #0a0a0a,inset -1px 0 0 #1c1c1c,inset 0 -1px 0 #3a3a3a,inset 0 1px 0 #121414;pointer-events:none"></div>
</div>
</body>
</html>
